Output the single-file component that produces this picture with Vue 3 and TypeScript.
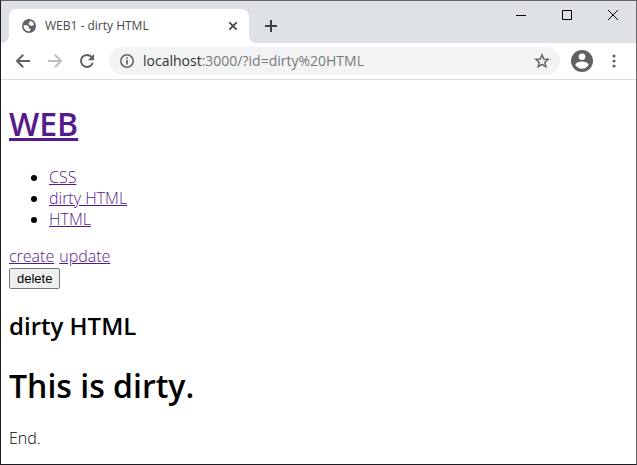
<script setup lang="ts">
interface Topic {
  id: string
  title: string
}

const topics: Topic[] = [
  { id: 'CSS', title: 'CSS' },
  { id: 'dirty%20HTML', title: 'dirty HTML' },
  { id: 'HTML', title: 'HTML' },
]
</script>

<template>
  <div class="window">
    <header class="strip">
      <div class="tab">
        <svg class="favicon" viewBox="0 0 16 16" aria-hidden="true">
          <circle cx="8" cy="8" r="7" fill="#5f6368" />
          <path d="M9.1 2.6 12 4.2 13 7.1 10.4 8 8.4 6.9 7.2 5.6 8.5 4.7ZM2.5 7.3 6 7.3 7.9 8.6 7.6 10.2 9.6 10.8 9.4 12.2 7.9 13.5 5 12.6 3 10.3Z" fill="#fff" />
        </svg>
        <span class="tab-title">WEB1 - dirty HTML</span>
        <button class="plain tab-close" type="button" aria-label="Close tab">
          <svg width="10" height="10" viewBox="0 0 10 10"><path d="M1.3 1.3 8.7 8.7M8.7 1.3 1.3 8.7" stroke="#45494d" stroke-width="1.8" /></svg>
        </button>
      </div>
      <button class="plain new-tab" type="button" aria-label="New tab">
        <svg width="12" height="12" viewBox="0 0 12 12"><path d="M6 0V12M0 6H12" stroke="#3c4043" stroke-width="2" /></svg>
      </button>
      <div class="controls">
        <button class="plain control" type="button" aria-label="Minimize">
          <svg width="12" height="12" viewBox="0 0 12 12"><path d="M1 6.5H11" stroke="#000" /></svg>
        </button>
        <button class="plain control" type="button" aria-label="Maximize">
          <svg width="12" height="12" viewBox="0 0 12 12"><path d="M1.5 1.5H10.5V10.5H1.5Z" fill="none" stroke="#000" /></svg>
        </button>
        <button class="plain control" type="button" aria-label="Close">
          <svg width="12" height="12" viewBox="0 0 12 12"><path d="M1 1 11 11M11 1 1 11" stroke="#000" /></svg>
        </button>
      </div>
    </header>

    <nav class="toolbar">
      <button class="plain tool" type="button" aria-label="Back">
        <svg width="16" height="16" viewBox="0 0 16 16"><path d="M15 8H2.5M8.2 1.8 2 8 8.2 14.2" fill="none" stroke="#5f6368" stroke-width="2" /></svg>
      </button>
      <button class="plain tool" type="button" aria-label="Forward" disabled>
        <svg width="16" height="16" viewBox="0 0 16 16"><path d="M1 8H13.5M7.8 1.8 14 8 7.8 14.2" fill="none" stroke="#bbbdbf" stroke-width="2" /></svg>
      </button>
      <button class="plain tool" type="button" aria-label="Reload">
        <svg width="16" height="16" viewBox="0 0 16 16"><path d="M13.7 9.7A6 6 0 1 1 12.5 4" fill="none" stroke="#5f6368" stroke-width="2" /><path d="M15 1V7.2H8.8Z" fill="#5f6368" /></svg>
      </button>
      <div class="omnibox">
        <svg class="info" width="16" height="16" viewBox="0 0 16 16" aria-hidden="true"><circle cx="8" cy="8" r="6.2" fill="none" stroke="#5f6368" stroke-width="1.5" /><path d="M8 7V11.4M8 4.4V6" stroke="#5f6368" stroke-width="1.7" /></svg>
        <span class="url">localhost<span class="path">:3000/?id=dirty%20HTML</span></span>
        <button class="plain star" type="button" aria-label="Bookmark this page">
          <svg width="16" height="16" viewBox="0 0 16 16"><path d="M8 1.8 9.7 6 14.2 6.3 10.8 9.2 11.9 13.7 8 11.3 4.1 13.7 5.2 9.2 1.8 6.3 6.3 6Z" fill="none" stroke="#5f6368" stroke-width="1.4" /></svg>
        </button>
      </div>
      <button class="plain profile" type="button" aria-label="Profile">
        <svg width="22" height="22" viewBox="0 0 22 22"><circle cx="11" cy="11" r="11" fill="#5f6368" /><circle cx="11" cy="6.7" r="3.3" fill="#fff" /><path d="M4.4 15C4.4 12.7 8.8 11.6 11 11.6S17.6 12.7 17.6 15C16.2 17.3 13.8 18.7 11 18.7S5.8 17.3 4.4 15Z" fill="#fff" /></svg>
      </button>
      <button class="plain menu" type="button" aria-label="Menu">
        <svg width="4" height="14" viewBox="0 0 4 14"><g fill="#5f6368"><circle cx="2" cy="2" r="1.6" /><circle cx="2" cy="7" r="1.6" /><circle cx="2" cy="12" r="1.6" /></g></svg>
      </button>
    </nav>

    <main class="page">
      <h1><a href="/">WEB</a></h1>
      <ul>
        <li v-for="topic in topics" :key="topic.id">
          <a :href="`/?id=${topic.id}`">{{ topic.title }}</a>
        </li>
      </ul>
      <div class="actions">
        <a href="/create">create</a>
        <a href="/update?id=dirty%20HTML">update</a>
      </div>
      <form @submit.prevent>
        <button class="delete" type="submit">delete</button>
      </form>
      <h2>dirty HTML</h2>
      <h1>This is dirty.</h1>
      <p>End.</p>
    </main>
  </div>
</template>

<style>
body {
  background: #fff;
}
</style>

<style scoped>
.window {
  box-sizing: border-box;
  min-height: 100vh;
  border: 1px solid #1c1b22;
  border-top-color: #626367;
  border-right-color: #68696b;
  font-family: "Open Sans", "Noto Sans", sans-serif;
  font-weight: 300;
}

.plain {
  display: flex;
  align-items: center;
  justify-content: center;
  padding: 0;
  border: 0;
  background: none;
}

.strip {
  display: flex;
  height: 42px;
  padding-left: 8px;
  background: #dee1e6;
}

.tab {
  position: relative;
  display: flex;
  align-items: center;
  box-sizing: border-box;
  width: 240px;
  height: 34px;
  margin-top: 8px;
  padding: 0 11px 0 12px;
  border-radius: 8px 8px 0 0;
  background: #fff;
}

.tab::before,
.tab::after {
  content: "";
  position: absolute;
  bottom: 0;
  width: 8px;
  height: 8px;
}

.tab::before {
  right: 100%;
  background: radial-gradient(circle at 0 0, #dee1e6 8px, #fff 8px);
}

.tab::after {
  left: 100%;
  background: radial-gradient(circle at 100% 0, #dee1e6 8px, #fff 8px);
}

.favicon {
  width: 16px;
  height: 16px;
}

.tab-title {
  flex: 1;
  margin-left: 8px;
  font-size: 12px;
  font-weight: 400;
  line-height: 16px;
  color: #45494d;
}

.new-tab {
  width: 28px;
  height: 28px;
  margin: 11px 0 0 8px;
}

.controls {
  display: flex;
  height: 28px;
  margin-left: auto;
}

.control {
  width: 46px;
}

.toolbar {
  display: flex;
  align-items: center;
  height: 36px;
  padding: 0 8px 0 6px;
  border-bottom: 1px solid #dadce0;
}

.tool {
  width: 32px;
  height: 28px;
}

.omnibox {
  display: flex;
  flex: 1;
  align-items: center;
  height: 28px;
  margin-left: 6px;
  padding: 0 10px;
  border-radius: 14px;
  background: #f1f3f4;
}

.url {
  flex: 1;
  margin-left: 8px;
  font-size: 14px;
  font-weight: 400;
  line-height: 20px;
  color: #303134;
}

.path {
  color: #777b7f;
}

.profile {
  margin-left: 11px;
}

.menu {
  width: 28px;
  height: 28px;
  margin-left: 7px;
}

.page {
  padding: 0 8px;
  font-size: 16px;
  line-height: 21px;
  color: #000;
}

.page a {
  color: #551a8b;
}

h1 {
  margin: 22px 0 21px;
  font-size: 32px;
  font-weight: 600;
  line-height: 43px;
}

h1 a {
  text-decoration-thickness: 3px;
}

ul {
  margin: 22px 0 16px;
  padding-left: 40px;
}

.actions {
  display: flex;
  gap: 5px;
}

form {
  margin: 0;
}

.delete {
  display: block;
  height: 21px;
  margin-top: 1px;
  padding: 0 7px;
  border: 1px solid #767676;
  border-radius: 2px;
  background: #efefef;
  font: 13px/17px "Liberation Sans", Arial, sans-serif;
  color: #000;
}

h2 {
  margin: 21px 0;
  font-size: 24px;
  font-weight: 600;
  line-height: 32px;
}

p {
  margin: 21px 0 14px;
}
</style>
